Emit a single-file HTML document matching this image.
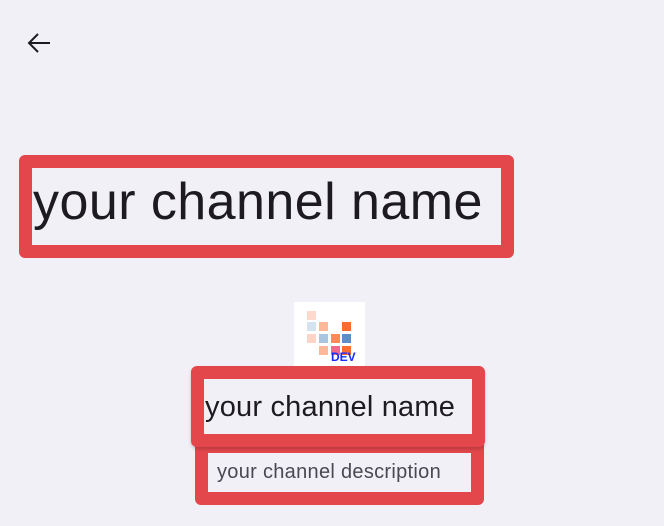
<!DOCTYPE html>
<html><head><meta charset="utf-8"><style>
body{margin:0;width:664px;height:526px;background:#f1f0f6;position:relative;overflow:hidden;font-family:"Liberation Sans",sans-serif}
.box{position:absolute;border:13px solid #e3474b;border-radius:6px;box-sizing:border-box;background:#f1f0f6}
.t{position:absolute;white-space:nowrap;color:#1d1b20}
.c{position:absolute;width:9px;height:9px}
</style></head><body>
<svg style="position:absolute;left:26px;top:32px" width="26" height="22" viewBox="0 0 26 22"><path d="M24 11H3M12 2L3 11l9 9" fill="none" stroke="#1d1b20" stroke-width="2"/></svg>
<div class="box" style="left:19px;top:155px;width:495px;height:103px"></div>
<div class="t" style="left:33px;top:172px;font-size:52px;line-height:60px;letter-spacing:0.45px">your channel name</div>
<div style="position:absolute;left:294px;top:302px;width:71px;height:64px;background:#fff"></div>
<div class="c" style="left:307px;top:311px;background:#fdd9cc"></div>
<div class="c" style="left:307px;top:322px;background:#d6e2ef"></div>
<div class="c" style="left:319px;top:322px;background:#fdb89a"></div>
<div class="c" style="left:342px;top:322px;background:#ff6a2f"></div>
<div class="c" style="left:307px;top:334px;background:#fdd4c8"></div>
<div class="c" style="left:319px;top:334px;background:#aac5e0"></div>
<div class="c" style="left:331px;top:334px;background:#ff8a55"></div>
<div class="c" style="left:342px;top:334px;background:#5b8fc5"></div>
<div class="c" style="left:319px;top:346px;background:#fdb89a"></div>
<div class="c" style="left:331px;top:346px;background:#ee6a8a"></div>
<div class="c" style="left:342px;top:346px;background:#ff6a2f"></div>
<div class="t" style="left:331px;top:351px;font-size:12px;font-weight:bold;color:#1a2cff;line-height:12px">DEV</div>
<div class="box" style="left:195px;top:440px;width:289px;height:65px"></div>
<div class="t" style="left:217px;top:460px;font-size:20px;line-height:24px;color:#4a4850;letter-spacing:0.3px">your channel description</div>
<div class="box" style="left:191px;top:366px;width:294px;height:81px;box-shadow:0 2px 3px rgba(0,0,0,.2)"></div>
<div class="t" style="left:205px;top:390px;font-size:29px;line-height:34px;letter-spacing:0.2px">your channel name</div>
</body></html>
